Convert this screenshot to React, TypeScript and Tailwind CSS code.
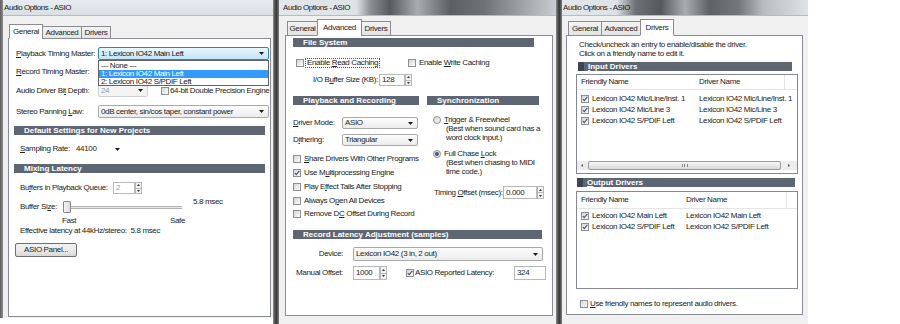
import type { ReactNode } from "react";

// Three "Audio Options - ASIO" dialog tabs shown side by side (Win7 look)

function U({ children }: { children: ReactNode }) {
  return <span className="underline decoration-[0.5px] underline-offset-[1px]">{children}</span>;
}

function Arrow() {
  return (
    <svg width="5" height="3" viewBox="0 0 5 3" className="flex-none">
      <path d="M0 0h5L2.5 3z" fill="#1a1a1a" />
    </svg>
  );
}

function TitleBar({ bg, pl }: { bg: string; pl: string }) {
  return (
    <div
      className={`h-[16px] flex-none flex items-center border-b border-[#b3bbc4] text-[8px] tracking-[-0.45px] text-[#1a1a1a] ${bg} ${pl}`}
    >
      Audio Options - ASIO
    </div>
  );
}

function Tabs({
  tabs,
  sel,
  pl,
  selH,
  offH,
}: {
  tabs: [string, string][];
  sel: number;
  pl: string;
  selH: string;
  offH: string;
}) {
  return (
    <div className={`flex items-end relative z-10 -mb-px ${selH} ${pl}`}>
      {tabs.map(([label, w], i) => (
        <div
          key={label}
          className={`${w} ${i === sel ? `${selH} bg-white border-b-white` : `${offH} bg-[linear-gradient(#f3f3f3,#e3e3e3)]`} ${
            i > 0 ? "-ml-px" : ""
          } flex items-center justify-center border border-[#898c95] text-[8px]`}
        >
          {label}
        </div>
      ))}
    </div>
  );
}

function Section({ cls, children, lead }: { cls: string; children: ReactNode; lead?: boolean }) {
  return (
    <div
      className={`flex-none h-[9px] flex items-center bg-[#5e6673] text-white font-bold tracking-normal text-[8px] ${cls}`}
    >
      {lead ? <span className="w-[6px] h-full bg-[#3e4450] mr-[4px]" /> : <span className="w-[10px]" />}
      {children}
    </div>
  );
}

function Combo({
  cls,
  text,
  variant,
}: {
  cls: string;
  text: string;
  variant?: "focus" | "disabled" | "flat";
}) {
  const look =
    variant === "focus"
      ? "border-[#3c7fb1] bg-[linear-gradient(#eaf6fd,#c2e4f7)]"
      : variant === "disabled"
        ? "border-[#cfcfcf] bg-[#f4f4f4] text-[#9a9a9a]"
        : variant === "flat"
          ? "border-transparent bg-white"
          : "border-[#a9a9a9] bg-[linear-gradient(#fdfdfd,#ececec)]";
  return (
    <div
      className={`flex-none flex items-center justify-between border rounded-[2px] pl-[2px] pr-[4px] whitespace-nowrap overflow-hidden ${look} ${cls}`}
    >
      <span>{text}</span>
      <Arrow />
    </div>
  );
}

function Box({ checked }: { checked?: boolean }) {
  return (
    <span className="w-[8px] h-[8px] flex-none border border-[#8f8f8f] bg-[linear-gradient(135deg,#d6d6d6,#fbfbfb)] flex items-center justify-center">
      {checked && (
        <svg width="6" height="6" viewBox="0 0 6 6">
          <path d="M0.8 3.1L2.3 4.7L5.3 0.9" stroke="#3d5580" strokeWidth="1.1" fill="none" />
        </svg>
      )}
    </span>
  );
}

function Radio({ on }: { on?: boolean }) {
  return (
    <span className="w-[8px] h-[8px] flex-none rounded-full border border-[#8f8f8f] bg-[linear-gradient(135deg,#d6d6d6,#fbfbfb)] flex items-center justify-center">
      {on && <span className="w-[4px] h-[4px] rounded-full bg-[#3d5a7c]" />}
    </span>
  );
}

function Spin() {
  return (
    <span className="w-[7px] h-full flex-none flex flex-col">
      <span className="flex-1 border border-[#b8b8b8] bg-[#f2f2f2] flex items-center justify-center">
        <svg width="3" height="2" viewBox="0 0 3 2">
          <path d="M0 2h3L1.5 0z" fill="#333" />
        </svg>
      </span>
      <span className="flex-1 border border-t-0 border-[#b8b8b8] bg-[#f2f2f2] flex items-center justify-center">
        <svg width="3" height="2" viewBox="0 0 3 2">
          <path d="M0 0h3L1.5 2z" fill="#333" />
        </svg>
      </span>
    </span>
  );
}

function Field({ cls, text, dim }: { cls: string; text: string; dim?: boolean }) {
  return (
    <span
      className={`flex-none h-full flex items-center pl-[2px] border border-[#b5b8bf] bg-white ${dim ? "text-[#9a9a9a]" : ""} ${cls}`}
    >
      {text}
    </span>
  );
}

function GeneralPanel() {
  return (
    <div className="w-[270px] h-[318px] flex-none flex flex-col bg-[#f0f0f0]">
      <TitleBar bg="bg-[linear-gradient(#e8ecf0,#d9dfe5)]" pl="pl-[1px]" />
      <div className="flex-1 pt-[8px] pl-[5px]">
        <Tabs
          pl="pl-[1px]"
          sel={0}
          selH="h-[15px]"
          offH="h-[13px]"
          tabs={[
            ["General", "w-[34px]"],
            ["Advanced", "w-[40px]"],
            ["Drivers", "w-[30px]"],
          ]}
        />
        <div className="w-[263px] h-[279px] border border-[#898c95] bg-white flex flex-col">
          <div className="mt-[8px] h-[13px] flex items-center relative">
            <span className="w-[89px] pl-[7px] flex-none">
              <U>P</U>layback Timing Master:
            </span>
            <Combo cls="w-[171px] h-[13px]" text="1: Lexicon IO42 Main Left" variant="focus" />
            <div className="absolute left-[89px] top-[13px] w-[171px] h-[26px] z-20 border border-[#646464] bg-white py-[1px] flex flex-col">
              <span className="h-[8px] pl-[2px] flex items-center">--- None ---</span>
              <span className="h-[8px] pl-[2px] flex items-center bg-[#3399ff] text-white">
                1: Lexicon IO42 Main Left
              </span>
              <span className="h-[8px] pl-[2px] flex items-center">2: Lexicon IO42 S/PDIF Left</span>
            </div>
          </div>
          <div className="mt-[5px] h-[13px] flex items-center pl-[7px]">
            <span>
              <U>R</U>ecord Timing Master:
            </span>
          </div>
          <div className="mt-[6px] h-[13px] flex items-center">
            <span className="w-[89px] pl-[7px] flex-none">
              Audio Driver Bi<U>t</U> Depth:
            </span>
            <Combo cls="w-[50px] h-[12px]" text="24" variant="disabled" />
            <span className="ml-[13px] flex items-center gap-[1px]">
              <Box />
              <span>64-bit Double Precision Engine</span>
            </span>
          </div>
          <div className="mt-[8px] h-[13px] flex items-center">
            <span className="w-[89px] pl-[7px] flex-none">
              Stereo Panning <U>L</U>aw:
            </span>
            <Combo cls="w-[171px] h-[13px]" text="0dB center, sin/cos taper, constant power" />
          </div>
          <Section cls="mt-[8px] ml-[5px] w-[251px]">Default Settings for New Projects</Section>
          <div className="mt-[8px] h-[12px] flex items-center">
            <span className="w-[64px] pl-[11px] flex-none">
              <U>S</U>ampling Rate:
            </span>
            <Combo cls="w-[52px] h-[12px]" text="44100" variant="flat" />
          </div>
          <Section cls="mt-[9px] ml-[5px] w-[251px]">
            Mi<U>x</U>ing Latency
          </Section>
          <div className="mt-[9px] h-[12px] flex items-center">
            <span className="w-[104px] pl-[11px] flex-none">
              Bu<U>f</U>fers in Playback Queue:
            </span>
            <Field cls="w-[22px]" text="2" dim />
            <Spin />
          </div>
          <div className="mt-[7px] h-[12px] flex items-center">
            <span className="w-[54px] pl-[11px] flex-none">
              Buffer Si<U>z</U>e:
            </span>
            <span className="w-[8px] h-[12px] flex-none border border-[#8a8a8a] rounded-[1px] bg-[linear-gradient(90deg,#f4f4f4,#dcdcdc)]" />
            <span className="w-[111px] h-[3px] flex-none border-y border-[#b0b0b0] bg-[#e8e8e8]" />
            <span className="ml-[11px] mb-[10px]">5.8 msec</span>
          </div>
          <div className="mt-[4px] h-[8px] flex items-center">
            <span className="ml-[53px] w-[108px] flex-none">Fast</span>
            <span>Safe</span>
          </div>
          <div className="mt-[1px] h-[9px] flex items-center pl-[11px]">
            Effective latency at 44kHz/stereo:{"\u00a0\u00a0"}5.8 msec
          </div>
          <div className="mt-[8px] ml-[6px] w-[62px] h-[14px] flex items-center justify-center border border-[#707070] rounded-[2px] bg-[linear-gradient(#f3f3f3,#ebebeb_50%,#d8d8d8)]">
            ASIO Panel...
          </div>
        </div>
      </div>
    </div>
  );
}

function AdvancedPanel() {
  return (
    <div className="w-[277px] h-[324px] flex-none flex flex-col bg-[#f0f0f0]">
      <TitleBar
        bg="bg-[linear-gradient(90deg,#e3e7eb_0%,#dde2e7_28%,#8c9095_33%,#575b60_40%,#a8acb1_50%,#5b5f64_62%,#6f7378_74%,#a0a4a9_88%,#c9cdd1_100%)]"
        pl="pl-[4px]"
      />
      <div className="flex-1 pt-[3px] pl-[6px]">
        <Tabs
          pl="pl-[2px]"
          sel={1}
          selH="h-[17px]"
          offH="h-[15px]"
          tabs={[
            ["General", "w-[31px]"],
            ["Advanced", "w-[45px]"],
            ["Drivers", "w-[30px]"],
          ]}
        />
        <div className="w-[268px] h-[281px] border border-[#898c95] bg-white flex flex-col">
          <Section cls="mt-[2px] ml-[7px] w-[241px]">File System</Section>
          <div className="mt-[11px] h-[9px] flex items-center">
            <span className="ml-[10px] w-[112px] flex-none flex items-center gap-[1px]">
              <Box />
              <span className="px-[1px] border border-dotted border-[#555]">
                Enable <U>R</U>ead Caching
              </span>
            </span>
            <span className="flex items-center gap-[3px]">
              <Box />
              <span>
                Enable <U>W</U>rite Caching
              </span>
            </span>
          </div>
          <div className="mt-[7px] h-[12px] flex items-center">
            <span className="ml-[27px] w-[66px] flex-none">
              I/O B<U>u</U>ffer Size (KB):
            </span>
            <Field cls="w-[26px]" text="128" />
            <Spin />
          </div>
          <div className="mt-[10px] flex items-start">
            <div className="ml-[7px] w-[126px] flex-none flex flex-col">
              <Section cls="w-[126px]">Playback and Recording</Section>
              <div className="mt-[12px] h-[12px] flex items-center">
                <span className="w-[49px] flex-none">
                  <U>D</U>river Mode:
                </span>
                <Combo cls="w-[76px] h-[12px]" text="ASIO" />
              </div>
              <div className="mt-[5px] h-[12px] flex items-center">
                <span className="w-[49px] flex-none">
                  D<U>i</U>thering:
                </span>
                <Combo cls="w-[76px] h-[12px]" text="Triangular" />
              </div>
              {[
                ["mt-[8px]", <><U>S</U>hare Drivers With Other Programs</>, false],
                ["mt-[4px]", <>Use M<U>u</U>ltiprocessing Engine</>, true],
                ["mt-[4px]", <>Play E<U>f</U>fect Tails After Stopping</>, false],
                ["mt-[4px]", <>Always O<U>p</U>en All Devices</>, false],
                ["mt-[3px]", <>Remove D<U>C</U> Offset During Record</>, false],
              ].map(([mt, label, on], i) => (
                <div key={i} className={`${mt as string} h-[10px] flex items-center gap-[3px] whitespace-nowrap`}>
                  <Box checked={on as boolean} />
                  <span>{label as ReactNode}</span>
                </div>
              ))}
            </div>
            <div className="ml-[8px] w-[120px] flex-none flex flex-col">
              <Section cls="w-[112px]">Synchronization</Section>
              <div className="pl-[6px] flex flex-col whitespace-nowrap">
                <div className="mt-[10px] h-[9px] flex items-center gap-[3px]">
                  <Radio />
                  <span>
                    <U>T</U>rigger &amp; Freewheel
                  </span>
                </div>
                <div className="h-[9px] flex items-center pl-[13px]">(Best when sound card has a</div>
                <div className="h-[9px] flex items-center pl-[13px]">word clock input.)</div>
                <div className="mt-[7px] h-[9px] flex items-center gap-[3px]">
                  <Radio on />
                  <span>
                    Full Chase <U>L</U>ock
                  </span>
                </div>
                <div className="h-[9px] flex items-center pl-[13px]">(Best when chasing to MIDI</div>
                <div className="h-[9px] flex items-center pl-[13px]">time code.)</div>
                <div className="mt-[10px] h-[13px] flex items-center">
                  <span className="w-[70px] pl-[1px] flex-none">
                    Timing <U>O</U>ffset (msec):
                  </span>
                  <Field cls="w-[34px]" text="0.000" />
                  <Spin />
                </div>
              </div>
            </div>
          </div>
          <Section cls="mt-[11px] ml-[7px] w-[249px]">Record Latency Adjustment (samples)</Section>
          <div className="mt-[8px] h-[14px] flex items-center">
            <span className="w-[57px] flex-none text-right">Device:</span>
            <Combo cls="ml-[10px] w-[190px] h-[14px]" text="Lexicon IO42 (3 in, 2 out)" />
          </div>
          <div className="mt-[5px] h-[14px] flex items-center">
            <span className="w-[57px] flex-none text-right">Manual Offset:</span>
            <span className="ml-[10px] h-full flex">
              <Field cls="w-[27px]" text="1000" />
              <Spin />
            </span>
            <span className="ml-[19px] flex items-center gap-[1px]">
              <Box checked />
              <span className="w-[99px] flex-none">ASIO Reported Latency:</span>
            </span>
            <Field cls="w-[32px]" text="324" />
          </div>
        </div>
      </div>
    </div>
  );
}

function DriverRow({ name, driver, col }: { name: string; driver: string; col: string }) {
  return (
    <div className="h-[11px] flex items-center whitespace-nowrap">
      <span className="ml-[4px]">
        <Box checked />
      </span>
      <span className={`ml-[3px] flex-none ${col}`}>{name}</span>
      <span>{driver}</span>
    </div>
  );
}

function DriversPanel() {
  return (
    <div className="w-[246px] h-[324px] flex-none flex flex-col bg-[#f0f0f0]">
      <TitleBar
        bg="bg-[linear-gradient(90deg,#e3e7eb_0%,#dde2e7_22%,#6d7176_30%,#55595e_40%,#a9adb2_50%,#5e6267_60%,#74787d_72%,#b9bdc2_82%,#dfe3e7_100%)]"
        pl="pl-[1px]"
      />
      <div className="flex-1 pt-[3px] pl-[4px]">
        <Tabs
          pl="pl-[2px]"
          sel={2}
          selH="h-[17px]"
          offH="h-[15px]"
          tabs={[
            ["General", "w-[34px]"],
            ["Advanced", "w-[40px]"],
            ["Drivers", "w-[34px]"],
          ]}
        />
        <div className="w-[237px] h-[280px] border border-[#898c95] bg-white flex flex-col whitespace-nowrap">
          <div className="mt-[4px] h-[9px] flex items-center pl-[12px]">
            Check/uncheck an entry to enable/disable the driver.
          </div>
          <div className="h-[9px] flex items-center pl-[12px]">Click on a friendly name to edit it.</div>
          <Section cls="mt-[4px] ml-[11px] w-[214px]" lead>
            <U>I</U>nput Drivers
          </Section>
          <div className="mt-[3px] ml-[9px] w-[222px] h-[100px] flex-none border border-[#828790] bg-white flex flex-col">
            <div className="h-[15px] flex-none flex items-center border-b border-[#e5e5e5]">
              <span className="w-[122px] pl-[4px] flex-none">Friendly Name</span>
              <span className="flex-1 border-r border-[#e5e5e5] h-full flex items-center">Driver Name</span>
              <span className="w-[12px]" />
            </div>
            <div className="mt-[3px] flex flex-col">
              <DriverRow col="w-[107px]" name="Lexicon IO42 Mic/Line/Inst. 1" driver="Lexicon IO42 Mic/Line/Inst. 1" />
              <DriverRow col="w-[107px]" name="Lexicon IO42 Mic/Line 3" driver="Lexicon IO42 Mic/Line 3" />
              <DriverRow col="w-[107px]" name="Lexicon IO42 S/PDIF Left" driver="Lexicon IO42 S/PDIF Left" />
            </div>
            <div className="mt-auto mb-[3px] h-[9px] flex items-stretch bg-[#ececec]">
              <span className="w-[9px] flex items-center justify-center">
                <svg width="2" height="3" viewBox="0 0 2 3">
                  <path d="M2 0v3L0 1.5z" fill="#555" />
                </svg>
              </span>
              <span className="ml-[2px] w-[193px] border border-[#9c9c9c] rounded-[2px] bg-[linear-gradient(#f6f6f6,#dadada)] flex items-center justify-center">
                <span className="w-[6px] h-[3px] border-x border-[#888] flex justify-center">
                  <span className="w-px h-full bg-[#888]" />
                </span>
              </span>
              <span className="flex-1 flex items-center justify-center">
                <svg width="2" height="3" viewBox="0 0 2 3">
                  <path d="M0 0v3L2 1.5z" fill="#555" />
                </svg>
              </span>
            </div>
          </div>
          <Section cls="mt-[4px] ml-[10px] w-[218px]" lead>
            <U>O</U>utput Drivers
          </Section>
          <div className="mt-[4px] ml-[9px] w-[222px] h-[98px] flex-none border border-[#828790] bg-white flex flex-col">
            <div className="h-[17px] flex-none flex items-center border-b border-[#e5e5e5]">
              <span className="w-[109px] pl-[4px] flex-none">Friendly Name</span>
              <span className="flex-1 border-r border-[#e5e5e5] h-full flex items-center">Driver Name</span>
              <span className="w-[10px]" />
            </div>
            <div className="mt-[1px] flex flex-col">
              <DriverRow col="w-[94px]" name="Lexicon IO42 Main Left" driver="Lexicon IO42 Main Left" />
              <DriverRow col="w-[94px]" name="Lexicon IO42 S/PDIF Left" driver="Lexicon IO42 S/PDIF Left" />
            </div>
          </div>
          <div className="mt-[10px] ml-[13px] h-[9px] flex items-center gap-[2px]">
            <Box />
            <span>
              <U>U</U>se friendly names to represent audio drivers.
            </span>
          </div>
        </div>
      </div>
    </div>
  );
}

function Strip() {
  return (
    <div className="w-[6px] h-[324px] flex-none bg-[linear-gradient(90deg,#8e8e8e,#4a4a4a_35%,#3c3c3c_60%,#7e7e7e)]" />
  );
}

export default function App() {
  return (
    <div className="w-[900px] h-[324px] bg-white flex items-start overflow-hidden font-['Liberation_Sans',Arial,sans-serif] text-[8px] leading-none tracking-[-0.35px] text-[#222]">
      <div className="w-[3px] h-[318px] flex-none bg-[linear-gradient(90deg,#5e5e5e,#8c8c8c)]" />
      <GeneralPanel />
      <Strip />
      <AdvancedPanel />
      <Strip />
      <DriversPanel />
    </div>
  );
}
